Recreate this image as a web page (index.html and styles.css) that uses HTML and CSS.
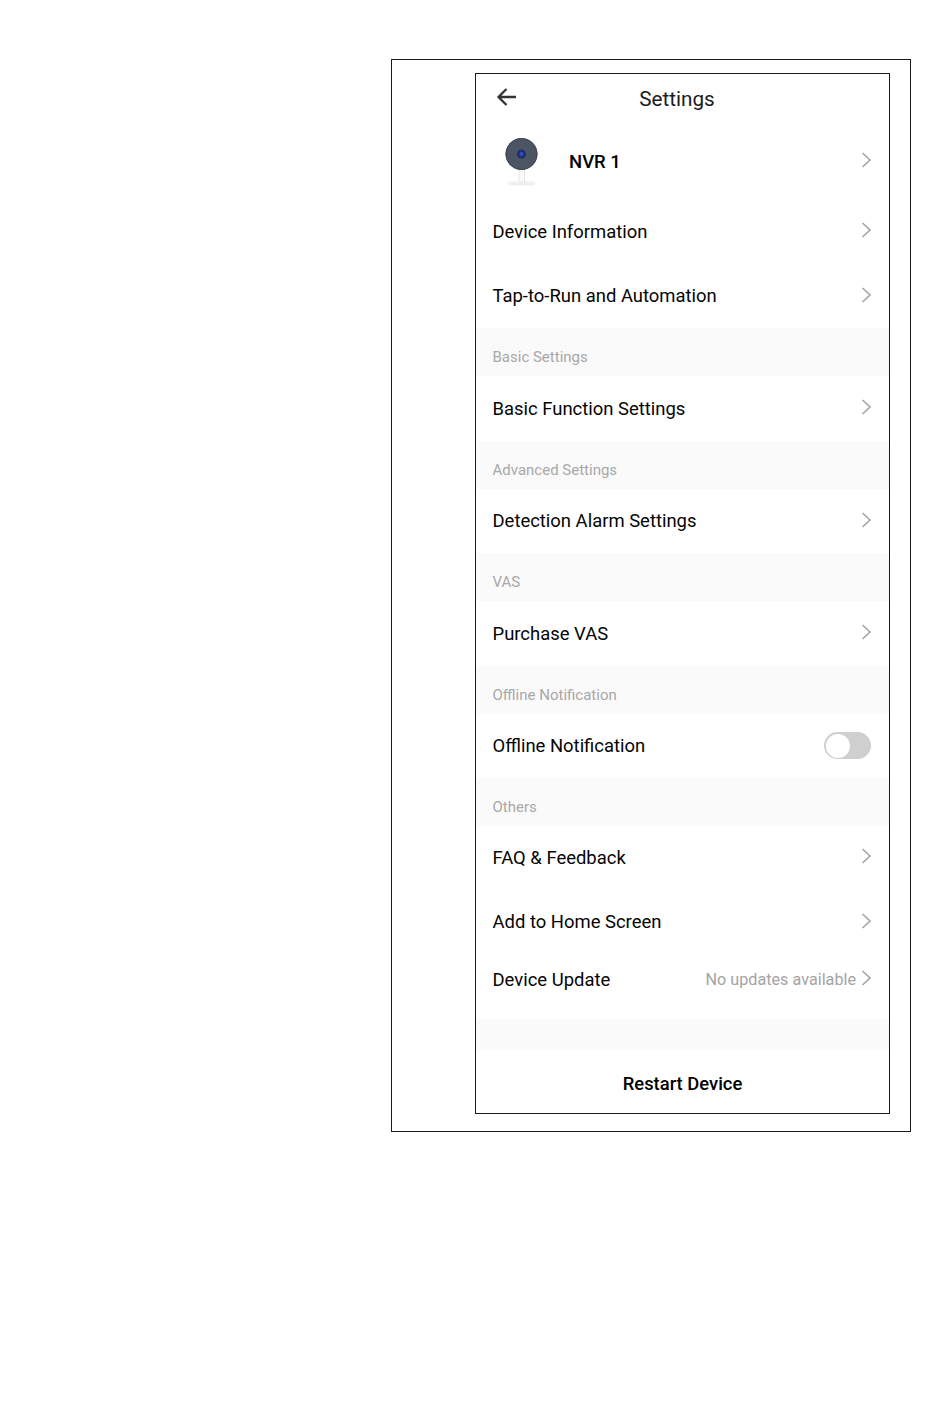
FILE: index.html
```html
<!DOCTYPE html>
<html lang="en">
<head>
<meta charset="utf-8">
<title>Settings</title>
<link rel="stylesheet" href="styles.css">
</head>
<body>
<div class="frame">
  <div class="phone">
    <header class="topbar">
      <svg class="back" width="22" height="20" viewBox="0 0 22 20"><path d="M20 10H2.500M10.500 2L2.500 10l8 8" fill="none" stroke="#333" stroke-width="2.300"/></svg>
      <h1 class="title">Settings</h1>
    </header>
    <div class="row device">
      <svg class="cam" width="46" height="54" viewBox="0 0 46 54">
        <rect x="20" y="33" width="5.500" height="12" fill="#fafafa" stroke="#e4e4e6" stroke-width="1"/>
        <rect x="9" y="44.500" width="27" height="4" rx="2" fill="#efeff1"/>
        <circle cx="22.500" cy="17" r="16" fill="#4c5564"/>
        <circle cx="22.500" cy="17" r="15.500" fill="none" stroke="#3f4754" stroke-width="1"/>
        <circle cx="22.500" cy="17" r="4.500" fill="#1d2f73"/>
        <circle cx="22.500" cy="17" r="2" fill="#2f50b8"/>
      </svg>
      <span class="device-name">NVR 1</span>
      <svg class="chev" width="12" height="16" viewBox="0 0 12 16"><path d="M2.500 1l7.500 7-7.500 7" fill="none" stroke="#a6a6a6" stroke-width="1.700"/></svg>
    </div>
    <div class="row"><span class="label">Device Information</span><svg class="chev" width="12" height="16" viewBox="0 0 12 16"><path d="M2.500 1l7.500 7-7.500 7" fill="none" stroke="#a6a6a6" stroke-width="1.700"/></svg></div>
    <div class="row"><span class="label">Tap-to-Run and Automation</span><svg class="chev" width="12" height="16" viewBox="0 0 12 16"><path d="M2.500 1l7.500 7-7.500 7" fill="none" stroke="#a6a6a6" stroke-width="1.700"/></svg></div>
    <div class="section">Basic Settings</div>
    <div class="row"><span class="label">Basic Function Settings</span><svg class="chev" width="12" height="16" viewBox="0 0 12 16"><path d="M2.500 1l7.500 7-7.500 7" fill="none" stroke="#a6a6a6" stroke-width="1.700"/></svg></div>
    <div class="section">Advanced Settings</div>
    <div class="row"><span class="label">Detection Alarm Settings</span><svg class="chev" width="12" height="16" viewBox="0 0 12 16"><path d="M2.500 1l7.500 7-7.500 7" fill="none" stroke="#a6a6a6" stroke-width="1.700"/></svg></div>
    <div class="section">VAS</div>
    <div class="row"><span class="label">Purchase VAS</span><svg class="chev" width="12" height="16" viewBox="0 0 12 16"><path d="M2.500 1l7.500 7-7.500 7" fill="none" stroke="#a6a6a6" stroke-width="1.700"/></svg></div>
    <div class="section">Offline Notification</div>
    <div class="row"><span class="label">Offline Notification</span><span class="toggle"><span class="knob"></span></span></div>
    <div class="section others">Others</div>
    <div class="row"><span class="label">FAQ &amp; Feedback</span><svg class="chev" width="12" height="16" viewBox="0 0 12 16"><path d="M2.500 1l7.500 7-7.500 7" fill="none" stroke="#a6a6a6" stroke-width="1.700"/></svg></div>
    <div class="row"><span class="label">Add to Home Screen</span><svg class="chev" width="12" height="16" viewBox="0 0 12 16"><path d="M2.500 1l7.500 7-7.500 7" fill="none" stroke="#a6a6a6" stroke-width="1.700"/></svg></div>
    <div class="row update"><span class="label">Device Update</span><span class="status">No updates available</span><svg class="chev" width="12" height="16" viewBox="0 0 12 16"><path d="M2.500 1l7.500 7-7.500 7" fill="none" stroke="#a6a6a6" stroke-width="1.700"/></svg></div>
    <div class="spacer"></div>
    <div class="restart">Restart Device</div>
  </div>
</div>
</body>
</html>
```
FILE: styles.css
```css
* { box-sizing: border-box; }
html, body { margin: 0; padding: 0; background: #fff; }
body {
  min-height: 1425px;
  padding: 59px 39px 0 391px;
  font-family: Roboto, "Liberation Sans", sans-serif;
  color: #000;
}
.frame {
  width: 520px;
  height: 1073px;
  border: 1px solid #1a1a1a;
  padding: 13px 20px 0 83px;
}
.phone {
  width: 415px;
  height: 1041px;
  border: 1px solid #1a1a1a;
  display: flex;
  flex-direction: column;
}
.topbar {
  height: 50.300px;
  flex: none;
  display: flex;
  align-items: center;
  position: relative;
}
.back { position: absolute; left: 20px; top: 13px; }
.title {
  margin: 0;
  width: 100%;
  text-align: center;
  padding-right: 11px;
  font-size: 20.700px;
  font-weight: 400;
  color: #1c1c1c;
}
.row {
  height: 64.500px;
  flex: none;
  display: flex;
  align-items: center;
  padding: 0 17px 0 16.500px;
}
.label { font-size: 18.450px; flex: 1; color: #050505; }
.device { height: 75px; padding-left: 22px; }
.cam { flex: none; margin-top: 4px; margin-left: 1px; margin-right: -1px; }
.device-name { flex: 1; margin-left: 25px; font-size: 18.500px; font-weight: 500; color: #000; }
.chev { flex: none; margin-top: -3px; }
.section {
  height: 48px;
  flex: none;
  background: #fafafa;
  padding: 21px 17px 0 16.500px;
  font-size: 15px;
  line-height: 17px;
  color: #a8a8a8;
}
.others { height: 47.400px; }
.update { padding-bottom: 14px; }
.status { font-size: 16.200px; color: #a4a4a4; margin-right: 4px; }
.toggle {
  width: 47px;
  height: 27px;
  border-radius: 14px;
  background: #cfcfcf;
  padding: 1.500px;
  flex: none;
  margin-right: 1px;
  margin-top: -1px;
  display: flex;
}
.knob {
  width: 24px;
  height: 24px;
  border-radius: 50%;
  background: #fff;
}
.spacer { height: 31px; flex: none; background: #fafafa; }
.restart {
  flex: 1;
  display: flex;
  align-items: center;
  justify-content: center;
  padding-top: 3px;
  font-size: 18.400px;
  font-weight: 500;
  color: #000;
}
```
